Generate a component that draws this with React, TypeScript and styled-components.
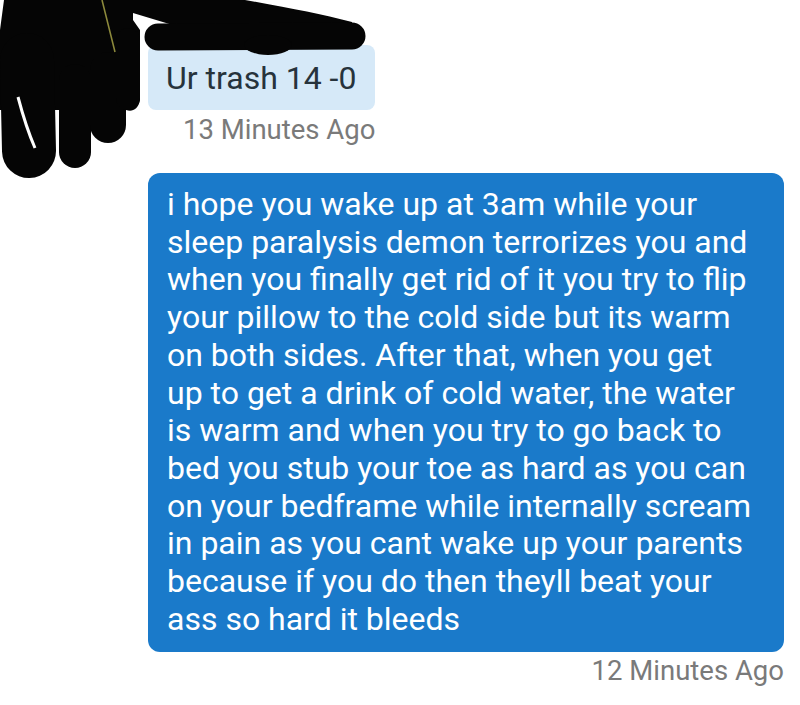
import React from "react";
import styled, { createGlobalStyle } from "styled-components";

const GlobalStyle = createGlobalStyle`
  html, body {
    margin: 0;
    padding: 0;
    background: #ffffff;
  }
  body {
    font-family: Roboto, "Noto Sans", "Liberation Sans", sans-serif;
  }
`;

const Page = styled.div`
  position: relative;
  width: 800px;
  height: 705px;
  overflow: hidden;
  background: #ffffff;
  box-sizing: border-box;
  padding: 45px 16px 0 148px;
  display: flex;
  flex-direction: column;
  align-items: flex-start;
`;

const Group = styled.div<{ $stretch?: boolean; $gap: number }>`
  display: flex;
  flex-direction: column;
  align-items: flex-end;
  align-self: ${(p) => (p.$stretch ? "stretch" : "flex-start")};
  margin-bottom: ${(p) => p.$gap}px;
`;

const IncomingBubble = styled.div`
  background: #d6e9f8;
  color: #27333c;
  font-size: 32px;
  line-height: 36px;
  padding: 15px 19px 14px 18px;
  border-radius: 8px;
  white-space: nowrap;
`;

const OutgoingBubble = styled.div`
  align-self: stretch;
  background: #1a7aca;
  color: #ffffff;
  font-size: 32px;
  line-height: 37.7px;
  padding: 13px 16px 14px 19px;
  border-radius: 12px;
`;

const Line = styled.span`
  display: block;
  white-space: nowrap;
`;

const Stamp = styled.div<{ $top: number }>`
  margin-top: ${(p) => p.$top}px;
  font-size: 27.5px;
  line-height: 30px;
  color: #7a7a7a;
  white-space: nowrap;
`;

const Scribble = styled.svg`
  position: absolute;
  left: 0;
  top: 0;
  width: 420px;
  height: 200px;
  pointer-events: none;
`;

const lines = [
  "i hope you wake up at 3am while your",
  "sleep paralysis demon terrorizes you and",
  "when you finally get rid of it you try to flip",
  "your pillow to the cold side but its warm",
  "on both sides. After that, when you get",
  "up to get a drink of cold water, the water",
  "is warm and when you try to go back to",
  "bed you stub your toe as hard as you can",
  "on your bedframe while internally scream",
  "in pain as you cant wake up your parents",
  "because if you do then theyll beat your",
  "ass so hard it bleeds",
];

export default function App() {
  return (
    <>
      <GlobalStyle />
      <Page>
        <Group $gap={28}>
          <IncomingBubble>Ur trash 14 -0</IncomingBubble>
          <Stamp $top={5}>13 Minutes Ago</Stamp>
        </Group>
        <Group $stretch $gap={0}>
          <OutgoingBubble>
            {lines.map((l, i) => (
              <Line key={i}>{l}</Line>
            ))}
          </OutgoingBubble>
          <Stamp $top={4}>12 Minutes Ago</Stamp>
        </Group>
        <Scribble viewBox="0 0 420 200">
          <g fill="#050505" stroke="#050505" strokeLinecap="round" strokeLinejoin="round">
            <path d="M4 0 H245 C290 8 320 14 352 22 L352 34 L176 26 L133 13 L133 20 L140 30 L140 100 C138 110 132 112 126 110 L0 110 L0 30 Z" stroke="none" />
            <line x1="158" y1="37" x2="352" y2="36" strokeWidth="27" />
            <ellipse cx="268" cy="45" rx="24" ry="10" stroke="none" />
            <line x1="27" y1="60" x2="29" y2="151" strokeWidth="54" />
            <line x1="75" y1="80" x2="75" y2="152" strokeWidth="32" />
            <line x1="108" y1="70" x2="108" y2="125" strokeWidth="36" />
            <line x1="128" y1="40" x2="128" y2="98" strokeWidth="24" />
          </g>
          <path d="M18 97 C23 116 28 132 35 148" stroke="#ffffff" strokeWidth="3" fill="none" />
          <path d="M102 0 L115 52" stroke="#8d8a3c" strokeWidth="1.6" fill="none" />
        </Scribble>
      </Page>
    </>
  );
}
